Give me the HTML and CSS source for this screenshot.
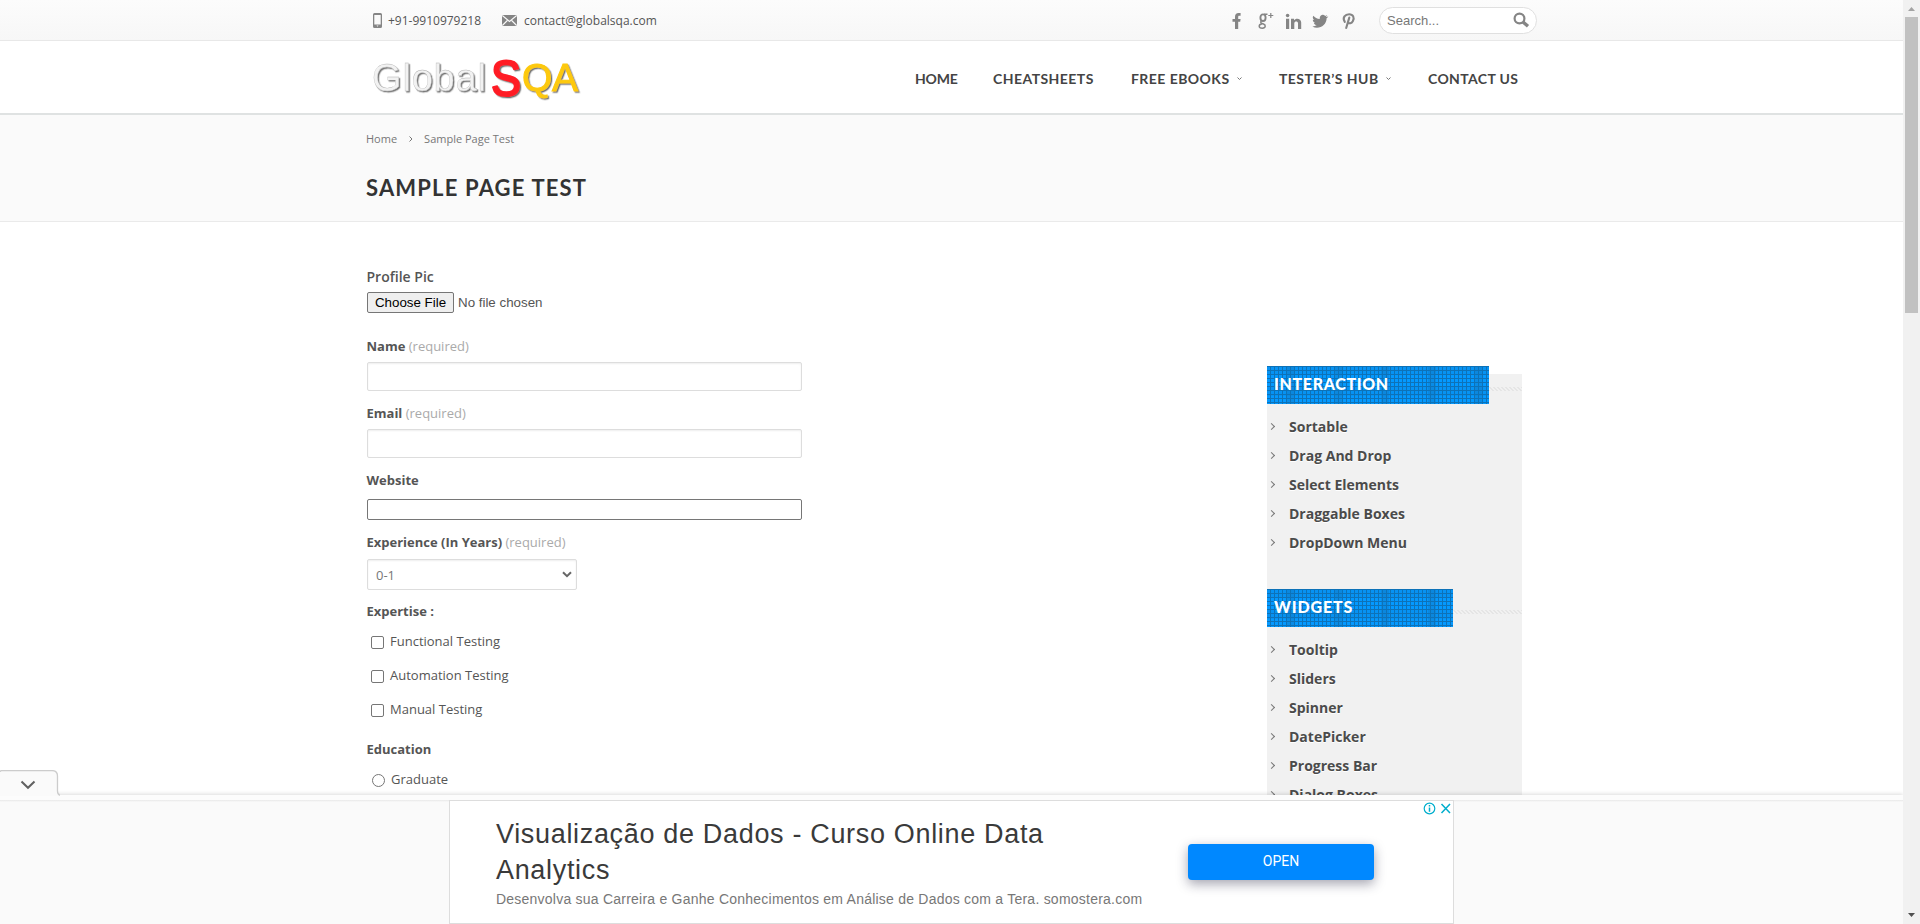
FILE: index.html
```
<!DOCTYPE html>
<html lang="en">
<head>
<meta charset="utf-8">
<title>Sample Page Test - GlobalSQA</title>
<link rel="stylesheet" href="styles.css">
</head>
<body>
<div class="window">
  <div class="page">
    <div class="site">
      <div class="topbar">
        <div class="contacts">
          <svg class="phone-icon" width="9" height="15" viewBox="0 0 9 15"><path fill="#858585" fill-rule="evenodd" d="M1.5 0h6A1.5 1.5 0 0 1 9 1.5v12A1.5 1.5 0 0 1 7.500 15h-6A1.500 1.500 0 0 1 0 13.500v-12A1.500 1.500 0 0 1 1.500 0zM1.300 2v9.500h6.400V2zM3.500 12.500l1 1.200 1-1.200z"/></svg>
          <span class="tel">+91-9910979218</span>
          <svg class="mail-icon" width="15" height="11" viewBox="0 0 15 11"><path fill="#858585" d="M0 0h15v11H0z"/><path fill="none" stroke="#fafafa" stroke-width="1.100" d="M.3.500l7.200 6 7.200-6M.3 10.500l5-5M14.700 10.500l-5-5"/></svg>
          <span class="mail">contact@globalsqa.com</span>
        </div>
        <div class="tools">
          <svg class="social" width="127" height="18" viewBox="0 0 127 18" fill="#858585">
            <path d="M3 17V9.800H.5V7H3V5C3 2.500 4.300 1 6.600 1h2v2.800H7.400C6.400 3.800 6.200 4.300 6.200 5v2h2.400l-.4 2.800h-2V17z"/>
            <g fill="none" stroke="#858585"><ellipse cx="31" cy="5.700" rx="2.600" ry="3.300" stroke-width="1.900"/><path stroke-width="1.400" d="M32 2.200h3.500M29.500 9c-2 1.500 0 2.300 2 3 2.600 1 2.400 4.200-1.100 4.200-4.200 0-4.300-3.700-.2-4.400"/><path stroke-width="1.200" d="M38.800 1v5M36.300 3.500h5"/></g>
            <path d="M54 6.800h3.200V17H54zM59 6.800h3v1.400c1.600-2.500 7.200-2.200 7.200 2.300V17H66v-5.700c0-2.600-3.700-2.300-3.700 0V17H59z"/><circle cx="55.600" cy="3.500" r="1.800"/>
            <path d="M96.300 4.400c-.5.800-1 1.300-1.700 1.800.2 6.800-7.600 12-14.300 8.300 1.700.1 3.200-.4 4.500-1.400-1.400-.1-2.400-.9-2.900-2.200h1.300c-1.500-.5-2.400-1.700-2.400-3.200l1.300.4c-1.400-1.200-1.700-2.700-.8-4.300 1.700 2 3.700 3.100 6.500 3.200-.7-3.600 3.100-5.400 5.400-3.100l2-.8-1.400 1.800z"/>
            <path fill="none" stroke="#858585" stroke-width="2.100" stroke-linecap="round" d="M112.800 9.800c-2.900-4.300.6-7.600 4.300-7.600 4 0 5.700 3.500 3.700 7-1.300 2.300-3.600 2.700-4.700 1M117.300 5.600L114.200 16"/>
          </svg>
          <div class="search"><span>Search...</span>
            <svg width="17" height="16" viewBox="0 0 17 16" fill="none" stroke="#858585"><circle cx="6.500" cy="6.500" r="4.900" stroke-width="2.200"/><path stroke-width="3.400" d="M10 10l5 4.300"/></svg>
          </div>
        </div>
      </div>
      <div class="header">
        <svg class="logo" width="216" height="58" viewBox="0 0 216 58">
          <defs><filter id="bevel" x="-5%" y="-5%" width="115%" height="120%"><feDropShadow dx="1.300" dy="1.300" stdDeviation=".6" flood-color="#555" flood-opacity=".8"/></filter></defs>
          <g font-family="'Liberation Sans', Arial, sans-serif" filter="url(#bevel)">
            <text class="logo-global" x="5" y="41" textLength="114">Global</text>
            <text class="logo-s" x="124" y="46" textLength="30" lengthAdjust="spacingAndGlyphs">S</text>
            <text class="logo-qa" x="155" y="41" textLength="56">QA</text>
          </g>
        </svg>
        <div class="nav">
          <span class="n1">HOME</span><span class="n2">CHEATSHEETS</span><span class="n3">FREE EBOOKS</span><svg class="caret c1" width="5" height="4" viewBox="0 0 5 4"><path d="M.5.500l2 2 2-2"/></svg><span class="n4">TESTER’S HUB</span><svg class="caret c2" width="5" height="4" viewBox="0 0 5 4"><path d="M.5.500l2 2 2-2"/></svg><span class="n5">CONTACT US</span>
        </div>
      </div>
      <div class="titleband">
        <div class="crumbs"><span>Home</span><svg width="4" height="6" viewBox="0 0 4 6"><path d="M.5.500L3 3 .5 5.500"/></svg><span>Sample Page Test</span></div>
        <h1>SAMPLE PAGE TEST</h1>
      </div>
      <div class="content">
        <div class="form">
          <div class="pic-label">Profile Pic</div>
          <div class="file"><span class="file-btn">Choose File</span><span class="file-name">No file chosen</span></div>
          <div class="label">Name <i>(required)</i></div>
          <div class="input"></div>
          <div class="label">Email <i>(required)</i></div>
          <div class="input"></div>
          <div class="label">Website</div>
          <div class="input plain"></div>
          <div class="label exp">Experience (In Years) <i>(required)</i></div>
          <div class="select"><span>0-1</span><svg width="10" height="7" viewBox="0 0 10 7"><path d="M1 1.200l4 4 4-4"/></svg></div>
          <div class="label expertise">Expertise :</div>
          <div class="option"><b class="box"></b>Functional Testing</div>
          <div class="option"><b class="box"></b>Automation Testing</div>
          <div class="option"><b class="box"></b>Manual Testing</div>
          <div class="label edu">Education</div>
          <div class="option radio"><b class="box"></b>Graduate</div>
        </div>
        <div class="sidebar">
          <div class="widget">
            <div class="head"><h3 class="wide">INTERACTION</h3><div class="stripe"></div></div>
            <ul><li>Sortable</li><li>Drag And Drop</li><li>Select Elements</li><li>Draggable Boxes</li><li>DropDown Menu</li></ul>
          </div>
          <div class="widget">
            <div class="head"><h3>WIDGETS</h3><div class="stripe"></div></div>
            <ul><li>Tooltip</li><li>Sliders</li><li>Spinner</li><li>DatePicker</li><li>Progress Bar</li><li>Dialog Boxes</li></ul>
          </div>
        </div>
      </div>
    </div>
    <div class="anchor">
      <div class="tab"><svg width="60" height="26" viewBox="0 0 60 26"><path fill="#fafafa" d="M0 .500h52q5.500 0 5.500 5.500v15q0 4.500 2.500 5H0z"/><path fill="none" stroke="#ccc" stroke-width="1.300" d="M0 2Q0 .600 2 .600h50q5.500 0 5.500 5.500v15q0 3.500 2.500 4.200"/><path fill="none" stroke="#616161" stroke-width="2" d="M21.500 11.500l6.500 6.300 6.500-6.300"/></svg></div>
      <div class="ad-row">
        <div class="ad">
          <div class="ad-text">
            <div class="ad-title">Visualização de Dados - Curso Online Data<br>Analytics</div>
            <div class="ad-desc">Desenvolva sua Carreira e Ganhe Conhecimentos em Análise de Dados com a Tera. somostera.com</div>
          </div>
          <div class="ad-btn">OPEN</div>
          <svg class="ad-choice" width="28" height="13" viewBox="0 0 28 13" fill="none" stroke="#00aecd"><circle cx="6.500" cy="6.500" r="5.300" stroke-width="1.200"/><path stroke-width="1.500" d="M6.500 5.500v4.200M6.500 3v1.500M18.500 2l8.500 9M27 2l-8.500 9"/></svg>
        </div>
      </div>
    </div>
  </div>
  <div class="scrollbar">
    <svg width="17" height="17" viewBox="0 0 17 17"><path fill="#a3a3a3" d="M5 11h7L8.500 7z"/></svg>
    <div class="thumb"></div>
    <svg class="down" width="17" height="17" viewBox="0 0 17 17"><path fill="#505050" d="M5 6h7l-3.500 4z"/></svg>
  </div>
</div>
</body>
</html>
```
FILE: styles.css
```
* { box-sizing: border-box; }
body { margin: 0; overflow: hidden; background: #fff; font-family: "Open Sans", sans-serif; color: #555; }
.window { display: flex; width: 1920px; height: 924px; overflow: hidden; }
.page { width: 1903px; height: 924px; display: flex; flex-direction: column; overflow: hidden; }
.site { height: 795px; overflow: hidden; }
svg { display: block; flex: none; }

.topbar { height: 41px; display: flex; justify-content: space-between; padding: 0 366px; background: linear-gradient(#fcfcfc, #f7f7f7); border-bottom: 1px solid #e8e8e8; }
.contacts { display: flex; align-items: center; padding-left: 7px; font-size: 12px; line-height: 40px; white-space: nowrap; }
.contacts span { padding-top: 1px; }
.tel { margin-left: 6px; width: 114px; }
.mail { margin-left: 7px; }
.tools { display: flex; align-items: center; }
.social { margin: 1px 20px 0 0; }
.search { width: 158px; height: 27px; border: 1px solid #e0e0e0; border-radius: 14px; background: #fff; display: flex; align-items: center; justify-content: space-between; padding: 0 6px 0 7px; font: 13px "Liberation Sans", Arial, sans-serif; color: #777; }

.header { height: 72px; display: flex; justify-content: space-between; padding: 9px 385px 0 367px; }
.logo-global { font-size: 38px; fill: #f2f2f2; stroke: #b4b4b4; stroke-width: .3px; }
.logo-s { font-size: 50px; fill: #ff1d25; stroke: #ff1d25; stroke-width: 2.200px; stroke-linejoin: round; }
.logo-qa { font-size: 39px; fill: #fdc90f; stroke: #fdc90f; stroke-width: 1px; }
.nav { display: flex; align-items: center; height: 58px; font: bold 14px/20px Lato, sans-serif; color: #444; white-space: nowrap; letter-spacing: .45px; }
.n1 { width: 78px; letter-spacing: -.2px; }
.n2 { width: 138px; }
.n3 { width: 106px; }
.n4 { width: 107px; }
.n5 { width: 90px; letter-spacing: .37px; }
.c1, .c2 { margin-right: 37px; }
.caret path, .crumbs path { fill: none; stroke: #777; }

.titleband { height: 109px; background: #fafafa; border-top: 2px solid #dfe2e2; border-bottom: 1px solid #eaeaea; padding: 14px 0 0 366px; }
.crumbs { display: flex; align-items: center; font-size: 11px; line-height: 20px; color: #777; }
.crumbs svg { margin: 0 11px 0 12px; }
h1 { margin: 23px 0 0; font: bold 22px/32px Lato, sans-serif; color: #333; letter-spacing: 1.160px; }

.content { display: flex; justify-content: space-between; padding: 0 381px 0 367px; }
.form { width: 435px; padding-top: 45px; }
.pic-label { margin-left: -.5px; font-size: 14px; line-height: 20px; height: 25px; font-weight: 600; }
.file { display: flex; height: 21px; margin-bottom: 23px; font: 13.333px/19px "Liberation Sans", Arial, sans-serif; }
.file-btn { width: 87px; border: 1px solid #767676; border-radius: 2px; background: #efefef; color: #000; text-align: center; }
.file-name { margin-left: 4px; line-height: 21px; }
.label { height: 26px; margin-left: -.5px; line-height: 20px; font-size: 13px; font-weight: bold; }
.label i { font-style: normal; font-weight: normal; color: #aaa; }
.input { height: 29px; margin-bottom: 12px; border: 1px solid #ddd; border-radius: 2px; box-shadow: inset 0 1px 2px rgba(0,0,0,.07); }
.input.plain { height: 21px; margin: 3px 0 12px; border-color: #767676; box-shadow: none; }
.select { width: 210px; height: 31px; margin: 1px 0 11px; border: 1px solid #ddd; border-radius: 2px; box-shadow: inset 0 1px 2px rgba(0,0,0,.07); display: flex; align-items: center; justify-content: space-between; padding: 0 4px 0 8px; font-size: 13px; color: #777; }
.select path { fill: none; stroke: #666; stroke-width: 2; }
.expertise { height: 30px; }
.option { display: flex; align-items: center; height: 20px; margin-bottom: 14px; padding-left: 4px; font-size: 13px; }
.box { width: 13px; height: 13px; margin: 2px 6px 0 0; border: 1px solid #767676; border-radius: 2px; background: #fff; }
.edu { margin-top: 20px; height: 30px; }
.radio { padding-left: 5px; }
.radio .box { border-radius: 50%; }

.sidebar { width: 255px; height: 429px; overflow: hidden; margin-top: 144px; background: linear-gradient(#fff 8px, #f1f1f1 8px); }
.widget { height: 223px; }
.head { display: flex; align-items: center; height: 38px; margin-bottom: 8px; }
h3 { margin: 0; width: 186px; height: 38px; padding-left: 7px; font: 900 16px/36px Lato, sans-serif; color: #fff; letter-spacing: .85px; background: repeating-linear-gradient(#0d72b8 0 1px, transparent 1px 4px), repeating-linear-gradient(90deg, transparent 0 3px, #0d72b8 3px 4px), repeating-linear-gradient(90deg, transparent 0 20px, rgba(20,110,175,.3) 20px 28px, transparent 28px 47px), repeating-linear-gradient(rgba(20,110,175,.15) 0 9px, transparent 9px 21px), #0499ff; }
h3.wide { width: 222px; letter-spacing: .65px; }
.stripe { flex: 1; height: 4px; margin-top: 8px; background: repeating-linear-gradient(45deg, #e5e5e5 0 1.400px, #f1f1f1 1.400px 2.828px); }
ul { margin: 0; padding: 0; list-style: none; }
li { height: 29px; line-height: 29px; padding-left: 3px; display: flex; align-items: center; font-size: 14px; font-weight: bold; color: #4b4b4b; text-shadow: 0 1px #fff; }
li::before { content: ""; width: 4px; height: 4px; margin: 0 15px 0 -1px; border: solid #777; border-width: 1px 1px 0 0; transform: rotate(45deg); }

.anchor { position: relative; height: 129px; background: #fafafa; box-shadow: 0 -1px 4px rgba(0,0,0,.14); }
.tab { position: absolute; left: 0; top: -25px; }
.ad-row { padding: 5px 449px 0; background: linear-gradient(#fcfcfc 5px, #e8e8e8 5px, #fafafa 7px); }
.ad { position: relative; width: 1005px; height: 124px; background: #fff; border: 1px solid #ddd; display: flex; font-family: "Liberation Sans", Arial, sans-serif; }
.ad-text { width: 738px; padding: 15px 0 0 46px; white-space: nowrap; }
.ad-title { font-size: 27px; line-height: 36px; color: #3a3a3a; letter-spacing: .670px; }
.ad-desc { margin-top: 1px; font-size: 14px; line-height: 20px; color: #777; letter-spacing: .23px; }
.ad-btn { width: 186px; height: 36px; margin-top: 43px; border-radius: 4px; background: #0088ff; color: #fff; font: 14px/35px Roboto, sans-serif; text-align: center; box-shadow: 0 4px 12px rgba(30,30,60,.4); }
.ad-choice { position: absolute; right: 2px; top: 1px; }

.scrollbar { width: 17px; height: 924px; background: #f1f1f1; display: flex; flex-direction: column; }
.thumb { width: 13px; height: 296px; margin-left: 2px; background: #c1c1c1; }
.down { margin-top: auto; }
```
